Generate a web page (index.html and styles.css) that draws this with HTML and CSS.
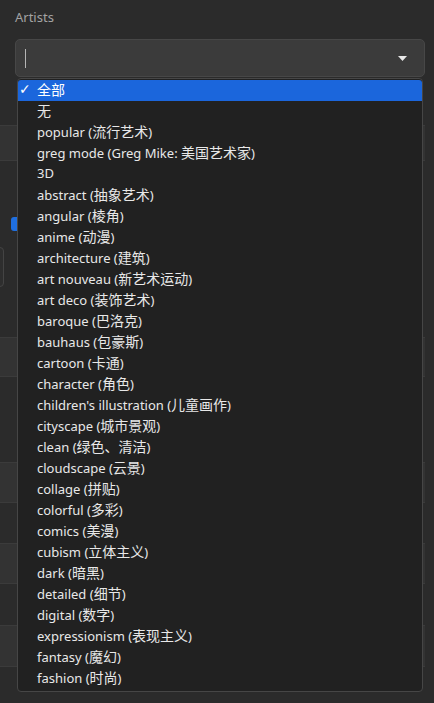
FILE: index.html
```html
<!DOCTYPE html>
<html lang="zh">
<head>
<meta charset="utf-8">
<link rel="stylesheet" href="styles.css">
</head>
<body>
<div class="panel">
  <div class="label">Artists</div>
  <div class="select">
    <span class="caret"></span>
    <svg class="arrow" width="9" height="5" viewBox="0 0 9 5"><path d="M0 0 H9 L4.5 5 Z" fill="#e8e8e8"/></svg>
  </div>
  <div class="behind">
    <div class="sp h48"></div>
    <div class="blk lite h36"></div>
    <div class="sp h56"></div>
    <div class="chkrow"><span class="chk"></span></div>
    <div class="sp h16"></div>
    <div class="boxrow"><span class="box"></span></div>
    <div class="sp h50"></div>
    <div class="blk lite h40"></div>
    <div class="sp h85"></div>
    <div class="blk lite h41"></div>
    <div class="blk h40 nb"></div>
    <div class="blk lite h41"></div>
    <div class="blk h41 nb"></div>
    <div class="blk lite h42"></div>
  </div>
  <ul class="menu">
    <li class="item sel"><span class="tick">✓</span><span class="zh">全部</span></li>
    <li class="item"><span class="zh">无</span></li>
    <li class="item">popular (<span class="zh">流行艺术</span>)</li>
    <li class="item">greg mode (Greg Mike: <span class="zh">美国艺术家</span>)</li>
    <li class="item">3D</li>
    <li class="item">abstract (<span class="zh">抽象艺术</span>)</li>
    <li class="item">angular (<span class="zh">棱角</span>)</li>
    <li class="item">anime (<span class="zh">动漫</span>)</li>
    <li class="item">architecture (<span class="zh">建筑</span>)</li>
    <li class="item">art nouveau (<span class="zh">新艺术运动</span>)</li>
    <li class="item">art deco (<span class="zh">装饰艺术</span>)</li>
    <li class="item">baroque (<span class="zh">巴洛克</span>)</li>
    <li class="item">bauhaus (<span class="zh">包豪斯</span>)</li>
    <li class="item">cartoon (<span class="zh">卡通</span>)</li>
    <li class="item">character (<span class="zh">角色</span>)</li>
    <li class="item">children's illustration (<span class="zh">儿童画作</span>)</li>
    <li class="item">cityscape (<span class="zh">城市景观</span>)</li>
    <li class="item">clean (<span class="zh">绿色、清洁</span>)</li>
    <li class="item">cloudscape (<span class="zh">云景</span>)</li>
    <li class="item">collage (<span class="zh">拼贴</span>)</li>
    <li class="item">colorful (<span class="zh">多彩</span>)</li>
    <li class="item">comics (<span class="zh">美漫</span>)</li>
    <li class="item">cubism (<span class="zh">立体主义</span>)</li>
    <li class="item">dark (<span class="zh">暗黑</span>)</li>
    <li class="item">detailed (<span class="zh">细节</span>)</li>
    <li class="item">digital (<span class="zh">数字</span>)</li>
    <li class="item">expressionism (<span class="zh">表现主义</span>)</li>
    <li class="item">fantasy (<span class="zh">魔幻</span>)</li>
    <li class="item">fashion (<span class="zh">时尚</span>)</li>
  </ul>
</div>
</body>
</html>
```
FILE: styles.css
```css
html, body {
  margin: 0;
  padding: 0;
  background: #2b2b2b;
  height: 100%;
  overflow: hidden;
}
body {
  font-family: "Noto Sans", "Noto Sans CJK SC", sans-serif;
  font-size: 13px;
  color: #e6e6e6;
}
.panel {
  position: relative;
  padding: 0 9px 0 15px;
}
.label {
  color: #a3a3a3;
  font-size: 13px;
  line-height: 18px;
  padding-top: 8px;
  height: 39px;
  box-sizing: border-box;
}
.select {
  height: 38px;
  background: #3b3b3b;
  border: 1px solid #474747;
  border-radius: 5px;
  box-sizing: border-box;
  display: flex;
  align-items: center;
  justify-content: space-between;
  padding: 0 17px 0 9px;
}
.caret {
  width: 1px;
  height: 19px;
  background: #b5b5b5;
}
.arrow { display: block; margin-top: 1px; }
.behind {
  margin-left: -15px;
  display: flex;
  flex-direction: column;
}
.sp { flex: none; }
.blk {
  border-top: 1px solid #3b3b3b;
  border-bottom: 1px solid #3b3b3b;
  box-sizing: border-box;
}
.blk.nb { border-top: none; border-bottom: none; }
.lite { background: #333333; }
.h16 { height: 16px; } .h36 { height: 36px; } .h40 { height: 40px; }
.h41 { height: 41px; } .h42 { height: 42px; } .h48 { height: 48px; }
.h50 { height: 50px; } .h56 { height: 56px; } .h85 { height: 85px; }
.chkrow { height: 14px; padding-left: 11px; }
.chk {
  display: block;
  width: 14px; height: 14px;
  background: #1f6fe0;
  border-radius: 3px;
}
.boxrow { height: 40px; }
.box {
  display: block;
  width: 14px; height: 40px;
  margin-left: -10px;
  border: 1px solid #444;
  border-radius: 4px;
  box-sizing: border-box;
  background: #2e2e2e;
}
.menu {
  position: absolute;
  top: 78px;
  left: 17px;
  width: 406px;
  margin: 0;
  padding: 1px 0 2px;
  list-style: none;
  background: #212121;
  border: 1px solid #464646;
  border-radius: 4px;
  box-sizing: border-box;
  height: 614px;
}
.item {
  height: 21px;
  line-height: 19px;
  padding-left: 19px;
  position: relative;
  white-space: nowrap;
  color: #e8e8e8;
}
.zh { font-size: 14px; }
.item.sel {
  background: #1b66dc;
  color: #fff;
  border-radius: 3px 3px 0 0;
}
.tick {
  position: absolute;
  left: 1px;
  top: 0;
  font-size: 14px;
  font-family: "DejaVu Sans", sans-serif;
}
```
